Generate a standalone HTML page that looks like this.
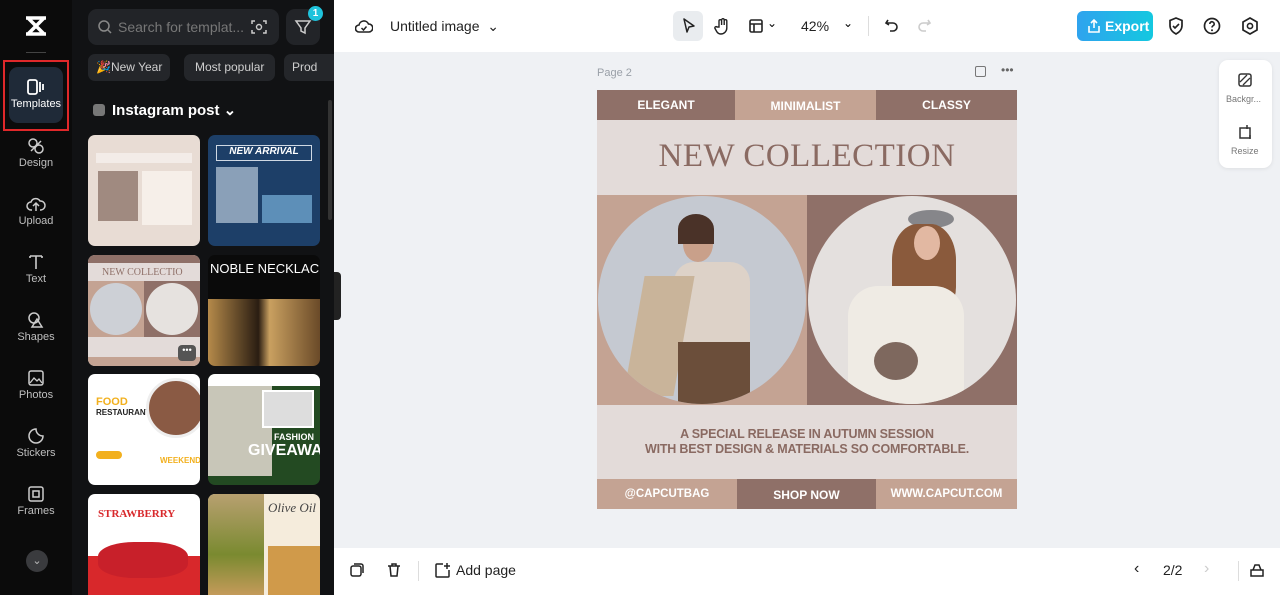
<!DOCTYPE html>
<html><head><meta charset="utf-8"><style>
*{margin:0;padding:0;box-sizing:border-box}
body{width:1280px;height:595px;overflow:hidden;font-family:"Liberation Sans",sans-serif;background:#eff1f4;position:relative}
.abs{position:absolute}
.side{left:0;top:0;width:72px;height:595px;background:#0b0b0b}
.navi{position:absolute;left:0;width:72px;text-align:center;color:#bfbfbf;font-size:11px}
.navi svg{display:block;margin:0 auto 2px}
.panel{left:72px;top:0;width:262px;height:595px;background:#111214}
.chip{position:absolute;top:54px;height:27px;border-radius:7px;background:#24262a;color:#cfcfcf;font-size:12px;line-height:27px;padding:0 8px}
.th{position:absolute;width:112px;border-radius:7px;overflow:hidden}
.top{left:334px;top:0;width:946px;height:52px;background:#fff}
.bot{left:334px;top:548px;width:946px;height:47px;background:#fff}
.card{left:597px;top:90px;width:420px;height:419px;background:#e3dbd9}
.bar{position:absolute;color:#fff;font-size:12px;text-align:center;font-weight:bold}
</style></head><body>
<div class="abs side">
  <svg class="abs" style="left:24px;top:15px" width="24" height="22" viewBox="0 0 24 22"><path d="M2 3h20M2 19h20M4 3l16 16M20 3L4 19" stroke="#fff" stroke-width="3.5" fill="none"/></svg>
  <div class="abs" style="left:26px;top:52px;width:20px;height:1px;background:#444"></div>
  <div class="abs" style="left:3px;top:60px;width:66px;height:71px;border:2px solid #e0282a"></div>
  <div class="abs" style="left:9px;top:67px;width:54px;height:56px;border-radius:9px;background:#1f2a38"></div>
  <div class="navi" style="top:78px;color:#fff">
    <svg width="20" height="18" viewBox="0 0 20 18"><rect x="2" y="2" width="9" height="14" rx="2" stroke="#fff" stroke-width="1.8" fill="none"/><path d="M14 4v10M17 6v6" stroke="#fff" stroke-width="1.8"/></svg>Templates</div>
  <div class="navi" style="top:137px"><svg width="18" height="18" viewBox="0 0 18 18"><circle cx="6" cy="6" r="4" stroke="#ccc" fill="none" stroke-width="1.5"/><circle cx="12" cy="12" r="4" stroke="#ccc" fill="none" stroke-width="1.5"/><path d="M4 14L14 4" stroke="#ccc" stroke-width="1.5"/></svg>Design</div>
  <div class="navi" style="top:195px"><svg width="20" height="18" viewBox="0 0 20 18"><path d="M6 15H5a4 4 0 010-8 5 5 0 019-1 4 4 0 011 9h-1M10 16V9M7 11l3-3 3 3" stroke="#ccc" fill="none" stroke-width="1.5"/></svg>Upload</div>
  <div class="navi" style="top:253px"><svg width="18" height="18" viewBox="0 0 18 18"><path d="M3 3h12M9 3v13M3 3v2M15 3v2" stroke="#ccc" stroke-width="1.6" fill="none"/></svg>Text</div>
  <div class="navi" style="top:311px"><svg width="18" height="18" viewBox="0 0 18 18"><circle cx="7" cy="7" r="5" stroke="#ccc" fill="none" stroke-width="1.5"/><path d="M10 8l5 8H5z" stroke="#ccc" fill="none" stroke-width="1.5"/></svg>Shapes</div>
  <div class="navi" style="top:369px"><svg width="18" height="18" viewBox="0 0 18 18"><rect x="2" y="2" width="14" height="14" rx="2" stroke="#ccc" fill="none" stroke-width="1.5"/><path d="M3 14l4-5 3 3 2-2 3 4" stroke="#ccc" fill="none" stroke-width="1.3"/></svg>Photos</div>
  <div class="navi" style="top:427px"><svg width="18" height="18" viewBox="0 0 18 18"><path d="M9 2a7 7 0 107 7c-4 0-7-3-7-7z" stroke="#ccc" fill="none" stroke-width="1.5"/></svg>Stickers</div>
  <div class="navi" style="top:485px"><svg width="18" height="18" viewBox="0 0 18 18"><rect x="2" y="2" width="14" height="14" rx="2" stroke="#ccc" fill="none" stroke-width="1.5"/><rect x="6" y="6" width="6" height="6" stroke="#ccc" fill="none" stroke-width="1.5"/></svg>Frames</div>
  <div class="abs" style="left:26px;top:550px;width:22px;height:22px;border-radius:50%;background:#3a3b3e;color:#bbb;font-size:11px;text-align:center;line-height:22px">⌄</div>
</div>
<div class="abs panel">
  <div class="abs" style="left:16px;top:9px;width:191px;height:36px;border-radius:9px;background:#222428;color:#777;font-size:14px;line-height:36px;padding-left:30px">Search for templat...</div>
  <svg class="abs" style="left:25px;top:19px" width="16" height="16" viewBox="0 0 16 16"><circle cx="7" cy="7" r="5" stroke="#888" fill="none" stroke-width="1.5"/><path d="M11 11l3 3" stroke="#888" stroke-width="1.5"/></svg>
  <svg class="abs" style="left:178px;top:18px" width="18" height="18" viewBox="0 0 18 18"><path d="M2 6V3h3M13 3h3v3M16 12v3h-3M5 15H2v-3" stroke="#ccc" fill="none" stroke-width="1.5"/><circle cx="9" cy="9" r="2.5" stroke="#ccc" fill="none" stroke-width="1.4"/></svg>
  <div class="abs" style="left:214px;top:9px;width:34px;height:36px;border-radius:9px;background:#222428"></div>
  <svg class="abs" style="left:222px;top:18px" width="18" height="18" viewBox="0 0 18 18"><path d="M2 3h14l-5 7v5l-4-2v-3z" stroke="#ccc" fill="none" stroke-width="1.5"/></svg>
  <div class="abs" style="left:236px;top:6px;width:15px;height:15px;border-radius:50%;background:#1fc3dc;color:#fff;font-size:10px;text-align:center;line-height:15px;font-weight:bold">1</div>
  <div class="chip" style="left:16px">🎉New Year</div>
  <div class="chip" style="left:112px;padding:0 11px">Most popular</div>
  <div class="chip" style="left:212px;width:50px;border-radius:7px 0 0 7px">Prod</div>
  <div class="abs" style="left:21px;top:104px;width:12px;height:12px;border-radius:3px;background:#777"></div>
  <div class="abs" style="left:40px;top:101px;color:#fff;font-size:15px;font-weight:bold">Instagram post ⌄</div>
  <div class="abs" style="left:256px;top:100px;width:4px;height:120px;border-radius:2px;background:#333"></div>
  <div class="th" style="left:16px;top:135px;height:111px;background:#e8dcd4"><div class="abs" style="left:8px;top:18px;width:96px;height:10px;background:#f3ece8"></div><div class="abs" style="left:10px;top:36px;width:40px;height:50px;background:#a08a80"></div><div class="abs" style="left:54px;top:36px;width:50px;height:54px;background:#f6efe9"></div></div>
  <div class="th" style="left:136px;top:135px;height:111px;background:#1d3f68"><div class="abs" style="left:8px;top:10px;width:96px;height:16px;border:1px solid #cfd8e3;color:#fff;font-size:10px;font-weight:bold;font-style:italic;text-align:center">NEW ARRIVAL</div><div class="abs" style="left:8px;top:32px;width:42px;height:56px;background:#8aa0b8"></div><div class="abs" style="left:54px;top:60px;width:50px;height:28px;background:#5d8fb8"></div></div>
  <div class="th" style="left:16px;top:255px;height:111px;background:#e3dbd9"><div class="abs" style="left:0;top:0;width:112px;height:8px;background:#8f7068"></div><div class="abs" style="left:14px;top:12px;color:#8f7068;font-size:10px;font-family:'Liberation Serif',serif">NEW COLLECTIO</div><div class="abs" style="left:0;top:26px;width:56px;height:56px;background:#c4a393"></div><div class="abs" style="left:56px;top:26px;width:56px;height:56px;background:#8f7068"></div><div class="abs" style="left:2px;top:28px;width:52px;height:52px;border-radius:50%;background:#cdd0d6"></div><div class="abs" style="left:58px;top:28px;width:52px;height:52px;border-radius:50%;background:#e6e2df"></div><div class="abs" style="left:0;top:102px;width:112px;height:9px;background:#c4a393"></div><div class="abs" style="left:90px;top:90px;width:18px;height:16px;border-radius:4px;background:#555;color:#fff;font-size:9px;text-align:center">•••</div></div>
  <div class="th" style="left:136px;top:255px;height:111px;background:#0a0a0a"><div class="abs" style="left:2px;top:6px;color:#fff;font-size:13px;white-space:nowrap">NOBLE NECKLACE</div><div class="abs" style="left:0;top:44px;width:112px;height:67px;background:linear-gradient(90deg,#b58a4a,#2a1d12 45%,#c9a060 55%,#6a4a28)"></div></div>
  <div class="th" style="left:16px;top:374px;height:111px;background:#fff"><div class="abs" style="left:8px;top:22px;color:#f2b01e;font-size:11px;font-weight:bold">FOOD</div><div class="abs" style="left:8px;top:34px;color:#222;font-size:8px;font-weight:bold">RESTAURANT</div><div class="abs" style="left:58px;top:4px;width:60px;height:60px;border-radius:50%;background:#8a5a44;border:3px solid #eee"></div><div class="abs" style="left:8px;top:77px;width:26px;height:8px;border-radius:4px;background:#f2b01e"></div><div class="abs" style="left:72px;top:82px;color:#f2b01e;font-size:8px;font-weight:bold">WEEKEND</div></div>
  <div class="th" style="left:136px;top:374px;height:111px;background:#234a22"><div class="abs" style="left:0;top:0;width:112px;height:12px;background:#fff"></div><div class="abs" style="left:0;top:12px;width:64px;height:90px;background:#c8c6b8"></div><div class="abs" style="left:54px;top:16px;width:52px;height:38px;background:#ddd;border:2px solid #fff"></div><div class="abs" style="left:66px;top:58px;color:#fff;font-size:9px;font-weight:bold">FASHION</div><div class="abs" style="left:40px;top:68px;color:#fff;font-size:16px;font-weight:bold">GIVEAWAY</div></div>
  <div class="th" style="left:16px;top:494px;height:101px;background:#fff;border-radius:7px 7px 0 0"><div class="abs" style="left:10px;top:14px;color:#d8282b;font-size:11px;font-weight:bold;font-family:'Liberation Serif',serif">STRAWBERRY</div><div class="abs" style="left:0;top:62px;width:112px;height:39px;background:#d8282b"></div><div class="abs" style="left:10px;top:48px;width:90px;height:36px;border-radius:40%;background:#c8202a"></div></div>
  <div class="th" style="left:136px;top:494px;height:101px;background:#f5ecdc;border-radius:7px 7px 0 0"><div class="abs" style="left:0;top:0;width:56px;height:101px;background:linear-gradient(#b8a070,#7a8a30 60%,#c49a5a)"></div><div class="abs" style="left:60px;top:6px;color:#444;font-size:13px;font-style:italic;font-family:'Liberation Serif',serif">Olive Oil</div><div class="abs" style="left:60px;top:52px;width:52px;height:49px;background:#d09a4a"></div></div>
</div>
<div class="abs" style="left:334px;top:272px;width:7px;height:48px;background:#222;border-radius:0 4px 4px 0"></div>
<div class="abs top">
  <svg class="abs" style="left:21px;top:17px" width="18" height="18" viewBox="0 0 18 18"><path d="M5 15H4a3.5 3.5 0 010-7 5 5 0 019.5-1A4 4 0 0114 15z" stroke="#222" fill="none" stroke-width="1.6"/><path d="M6.5 11l2 2 3-3.5" stroke="#222" fill="none" stroke-width="1.5"/></svg>
  <div class="abs" style="left:56px;top:18px;font-size:14px;color:#222">Untitled image &nbsp;⌄</div>
  <div class="abs" style="left:339px;top:11px;width:30px;height:30px;border-radius:6px;background:#e9ecef"></div>
  <svg class="abs" style="left:347px;top:18px" width="16" height="16" viewBox="0 0 16 16"><path d="M3 1l10 7-5 1-2 5z" stroke="#222" fill="none" stroke-width="1.5" stroke-linejoin="round"/></svg>
  <svg class="abs" style="left:380px;top:17px" width="18" height="18" viewBox="0 0 18 18"><path d="M5 10V4a1.3 1.3 0 012.6 0v4V3a1.3 1.3 0 012.6 0v5V4a1.3 1.3 0 012.6 0v7a6 6 0 01-6 6c-3 0-4-2-6-6a1.3 1.3 0 012.2-1z" stroke="#222" fill="none" stroke-width="1.4"/></svg>
  <svg class="abs" style="left:414px;top:18px" width="16" height="16" viewBox="0 0 16 16"><rect x="2" y="2" width="12" height="12" rx="1.5" stroke="#222" fill="none" stroke-width="1.6"/><path d="M2 6h12M6 6v8" stroke="#222" stroke-width="1.6"/></svg>
  <div class="abs" style="left:433px;top:16px;font-size:12px">⌄</div>
  <div class="abs" style="left:467px;top:18px;font-size:14px;color:#222">42%</div>
  <div class="abs" style="left:509px;top:16px;font-size:12px">⌄</div>
  <div class="abs" style="left:534px;top:16px;width:1px;height:20px;background:#ddd"></div>
  <svg class="abs" style="left:549px;top:17px" width="18" height="18" viewBox="0 0 18 18"><path d="M5 3L3 6l3 2M3 6h7a4 4 0 010 8H7" stroke="#222" fill="none" stroke-width="1.6"/></svg>
  <svg class="abs" style="left:581px;top:17px" width="18" height="18" viewBox="0 0 18 18"><path d="M13 3l2 3-3 2M15 6H8a4 4 0 000 8h3" stroke="#ccc" fill="none" stroke-width="1.6"/></svg>
  <div class="abs" style="left:743px;top:11px;width:76px;height:30px;border-radius:6px;background:linear-gradient(90deg,#2fa3ee,#14c8e0);color:#fff;font-size:14px;font-weight:bold;line-height:30px;padding-left:28px">Export</div>
  <svg class="abs" style="left:753px;top:18px" width="14" height="16" viewBox="0 0 14 16"><path d="M7 10V2M4 5l3-3 3 3M2 8v6h10V8" stroke="#fff" fill="none" stroke-width="1.6"/></svg>
  <svg class="abs" style="left:833px;top:16px" width="18" height="20" viewBox="0 0 18 20"><path d="M9 2l6 2.5v5c0 4-3 7-6 8.5-3-1.5-6-4.5-6-8.5v-5z" stroke="#222" fill="none" stroke-width="1.7"/><path d="M6 10l2 2 4-4" stroke="#222" fill="none" stroke-width="1.6"/></svg>
  <svg class="abs" style="left:869px;top:17px" width="18" height="18" viewBox="0 0 18 18"><circle cx="9" cy="9" r="7.5" stroke="#222" fill="none" stroke-width="1.7"/><path d="M6.8 7a2.2 2.2 0 114 1.2c-1 .7-1.8 1-1.8 2.3" stroke="#222" fill="none" stroke-width="1.6"/><circle cx="9" cy="13.3" r="1" fill="#222"/></svg>
  <svg class="abs" style="left:907px;top:16px" width="18" height="20" viewBox="0 0 18 20"><path d="M9 2l7 4v8l-7 4-7-4V6z" stroke="#222" fill="none" stroke-width="1.7"/><circle cx="9" cy="10" r="2.6" stroke="#222" fill="none" stroke-width="1.6"/></svg>
</div>
<div class="abs" style="left:597px;top:67px;font-size:11px;color:#9aa0a8">Page 2</div>
<div class="abs" style="left:975px;top:66px;width:11px;height:11px;border:1.5px solid #777;border-radius:2px"></div>
<div class="abs" style="left:1001px;top:63px;font-size:12px;color:#666">•••</div>
<div class="abs" style="left:1219px;top:60px;width:53px;height:108px;background:#fff;border-radius:9px;box-shadow:0 1px 4px rgba(0,0,0,.08)"></div>
<svg class="abs" style="left:1237px;top:72px" width="16" height="16" viewBox="0 0 16 16"><rect x="2" y="2" width="12" height="12" rx="2" stroke="#333" fill="none" stroke-width="1.5"/><path d="M3 10l7-7M6 13l7-7" stroke="#333" stroke-width="1.3"/></svg>
<div class="abs" style="left:1226px;top:94px;font-size:9px;color:#777">Backgr...</div>
<svg class="abs" style="left:1237px;top:124px" width="16" height="16" viewBox="0 0 16 16"><rect x="3" y="4" width="10" height="10" stroke="#333" fill="none" stroke-width="1.5"/><path d="M10 1v4M13 11v4" stroke="#333" stroke-width="1.5"/></svg>
<div class="abs" style="left:1231px;top:146px;font-size:9px;color:#777">Resize</div>
<div class="abs card">
  <div class="bar" style="left:0;top:0;width:138px;height:30px;background:#8f7068;line-height:30px">ELEGANT</div>
  <div class="bar" style="left:138px;top:0;width:141px;height:30px;background:#c4a393;line-height:32px">MINIMALIST</div>
  <div class="bar" style="left:279px;top:0;width:141px;height:30px;background:#8f7068;line-height:30px">CLASSY</div>
  <div class="abs" style="left:0;top:48px;width:420px;text-align:center;color:#8a6a62;font-size:33px;font-family:'Liberation Serif',serif;letter-spacing:.5px">NEW COLLECTION</div>
  <div class="abs" style="left:0;top:105px;width:210px;height:210px;background:#c4a393"></div>
  <div class="abs" style="left:210px;top:105px;width:210px;height:210px;background:#8f7068"></div>
  <div class="abs" style="left:1px;top:106px;width:208px;height:208px;border-radius:50%;overflow:hidden;background:#c5c9d1">
    <div class="abs" style="left:85px;top:30px;width:30px;height:36px;border-radius:50%;background:#c9a08a"></div>
    <div class="abs" style="left:80px;top:18px;width:36px;height:30px;border-radius:50% 50% 0 0;background:#4a3228"></div>
    <div class="abs" style="left:76px;top:66px;width:76px;height:80px;border-radius:20px 20px 0 0;background:#ddd2c8"></div>
    <div class="abs" style="left:36px;top:80px;width:50px;height:120px;background:#c9b49a;transform:skewX(-10deg)"></div>
    <div class="abs" style="left:80px;top:146px;width:72px;height:70px;background:#6b4e3a"></div>
  </div>
  <div class="abs" style="left:211px;top:106px;width:208px;height:208px;border-radius:50%;overflow:hidden;background:#e4e0de">
    <div class="abs" style="left:100px;top:14px;width:46px;height:18px;border-radius:50%;background:#86868a"></div>
    <div class="abs" style="left:84px;top:28px;width:64px;height:90px;border-radius:40% 40% 30% 30%;background:#8a5a3c"></div>
    <div class="abs" style="left:106px;top:30px;width:26px;height:34px;border-radius:50%;background:#e2b8a2"></div>
    <div class="abs" style="left:40px;top:90px;width:116px;height:130px;border-radius:30px 30px 0 0;background:#efebe4"></div>
    <div class="abs" style="left:66px;top:146px;width:44px;height:38px;border-radius:50%;background:#7e685e"></div>
  </div>
  <div class="abs" style="left:0;top:337px;width:420px;text-align:center;color:#8a6a62;font-size:12.5px;line-height:15px;font-weight:bold;letter-spacing:-.2px">A SPECIAL RELEASE IN AUTUMN SESSION<br>WITH BEST DESIGN &amp; MATERIALS SO COMFORTABLE.</div>
  <div class="bar" style="left:0;top:389px;width:140px;height:30px;background:#c4a393;line-height:30px;font-size:11.5px">@CAPCUTBAG</div>
  <div class="bar" style="left:140px;top:389px;width:139px;height:30px;background:#8f7068;line-height:32px">SHOP NOW</div>
  <div class="bar" style="left:279px;top:389px;width:141px;height:30px;background:#c4a393;line-height:30px;font-size:11.5px">WWW.CAPCUT.COM</div>
</div>
<div class="abs bot">
  <svg class="abs" style="left:15px;top:14px" width="16" height="16" viewBox="0 0 16 16"><rect x="2" y="4" width="10" height="10" rx="2" stroke="#222" fill="none" stroke-width="1.5"/><path d="M5 2h7a2 2 0 012 2v7" stroke="#222" fill="none" stroke-width="1.5"/></svg>
  <svg class="abs" style="left:52px;top:14px" width="16" height="16" viewBox="0 0 16 16"><path d="M2 4h12M6 4V2h4v2M4 4l1 10h6l1-10" stroke="#222" fill="none" stroke-width="1.5"/></svg>
  <div class="abs" style="left:84px;top:13px;width:1px;height:20px;background:#ddd"></div>
  <svg class="abs" style="left:100px;top:14px" width="17" height="17" viewBox="0 0 17 17"><path d="M9 2H3a1 1 0 00-1 1v11a1 1 0 001 1h11a1 1 0 001-1V8M13 1v6M10 4h6" stroke="#222" fill="none" stroke-width="1.5"/></svg>
  <div class="abs" style="left:122px;top:14px;font-size:14px;color:#222">Add page</div>
  <div class="abs" style="left:800px;top:12px;font-size:16px;color:#222">‹</div>
  <div class="abs" style="left:829px;top:14px;font-size:14px;color:#222">2/2</div>
  <div class="abs" style="left:870px;top:12px;font-size:16px;color:#ccc">›</div>
  <div class="abs" style="left:904px;top:13px;width:1px;height:20px;background:#ddd"></div>
  <svg class="abs" style="left:915px;top:14px" width="16" height="16" viewBox="0 0 16 16"><rect x="2" y="8" width="12" height="6" stroke="#222" fill="none" stroke-width="1.5"/><path d="M4 8l2-5h4l2 5" stroke="#222" fill="none" stroke-width="1.5"/></svg>
</div>
</body></html>
